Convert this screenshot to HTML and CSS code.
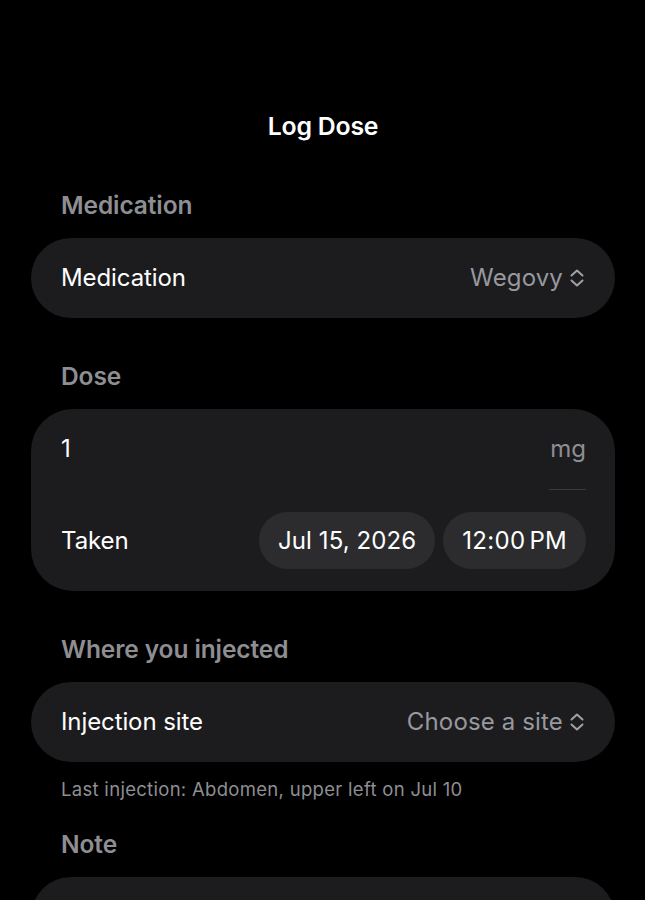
FILE: index.html
```html
<!DOCTYPE html>
<html lang="en">
<head>
<meta charset="utf-8">
<title>Log Dose</title>
<link rel="stylesheet" href="styles.css">
</head>
<body>
<main class="screen">
  <h1 class="title">Log Dose</h1>

  <h2 class="section-header first">Medication</h2>
  <div class="card row-card">
    <span class="label">Medication</span>
    <span class="picker">Wegovy
      <svg class="chev" width="14" height="20" viewBox="0 0 14 20" fill="none" stroke="currentColor" stroke-width="2" stroke-linecap="round" stroke-linejoin="round"><path d="M1.5 7.5 L7 2.5 L12.5 7.5"/><path d="M1.5 12.5 L7 17.5 L12.5 12.5"/></svg>
    </span>
  </div>

  <h2 class="section-header">Dose</h2>
  <div class="card dose-card">
    <div class="dose-row">
      <span class="label">1</span>
      <span class="unit">mg</span>
    </div>
    <div class="taken-row">
      <span class="label">Taken</span>
      <div class="pills">
        <span class="pill date-pill">Jul 15, 2026</span>
        <span class="pill time-pill">12:00<span class="ampm">PM</span></span>
      </div>
    </div>
  </div>

  <h2 class="section-header">Where you injected</h2>
  <div class="card row-card">
    <span class="label">Injection site</span>
    <span class="picker">Choose a site
      <svg class="chev" width="14" height="20" viewBox="0 0 14 20" fill="none" stroke="currentColor" stroke-width="2" stroke-linecap="round" stroke-linejoin="round"><path d="M1.5 7.5 L7 2.5 L12.5 7.5"/><path d="M1.5 12.5 L7 17.5 L12.5 12.5"/></svg>
    </span>
  </div>
  <p class="footnote">Last injection: Abdomen, upper left on Jul 10</p>

  <h2 class="section-header note-header">Note</h2>
  <div class="card note-card"></div>
</main>
</body>
</html>
```
FILE: styles.css
```css
html, body {
  margin: 0;
  padding: 0;
  background: #000;
}
body {
  font-family: Inter, "Noto Sans", "Liberation Sans", sans-serif;
  color: #fff;
  overflow: hidden;
  height: 900px;
}
.screen {
  padding: 111px 30px 0 31px;
  display: flex;
  flex-direction: column;
}
.title {
  margin: 0;
  text-align: center;
  font-size: 24.8px;
  line-height: 30px;
  font-weight: 600;
  letter-spacing: -0.2px;
}
.section-header {
  margin: 43px 0 18px 30px;
  font-size: 24.5px;
  line-height: 30px;
  font-weight: 600;
  color: #8e8e93;
  letter-spacing: -0.1px;
}
.section-header.first {
  margin-top: 49px;
}
.card {
  background: #1c1c1e;
  border-radius: 40px;
}
.row-card {
  height: 80px;
  box-sizing: border-box;
  padding: 0 31px 0 30px;
  display: flex;
  align-items: center;
  justify-content: space-between;
}
.label {
  font-size: 24px;
  line-height: 30px;
  color: #fff;
  letter-spacing: -0.1px;
}
.picker {
  display: flex;
  align-items: center;
  gap: 7px;
  font-size: 24px;
  line-height: 30px;
  color: #98989f;
  letter-spacing: 0.15px;
}
.chev {
  color: #a1a1a6;
  display: block;
}
.dose-card {
  padding: 25px 29px 22px 30px;
  border-radius: 42px;
}
.dose-row {
  display: flex;
  justify-content: space-between;
  align-items: flex-start;
}
.unit {
  font-size: 24px;
  line-height: 30px;
  color: #8e8e93;
  padding: 0 0 25px 0;
  border-bottom: 1px solid #3a3a3c;
  width: 37px;
  text-align: right;
}
.taken-row {
  margin-top: 22px;
  display: flex;
  align-items: center;
  justify-content: space-between;
}
.pills {
  display: flex;
  gap: 8px;
}
.pill {
  height: 57px;
  border-radius: 29px;
  background: #2c2c2f;
  display: flex;
  align-items: center;
  padding: 0 19px;
  font-size: 24px;
  color: #fff;
  letter-spacing: 0.1px;
}
.time-pill {
  letter-spacing: 0.3px;
}
.ampm {
  margin-left: 4px;
}
.footnote {
  margin: 16px 0 0 30px;
  font-size: 18.5px;
  line-height: 22px;
  color: #8e8e93;
  letter-spacing: 0.3px;
}
.section-header.note-header {
  margin-top: 29px;
}
.note-card {
  height: 120px;
}
```
